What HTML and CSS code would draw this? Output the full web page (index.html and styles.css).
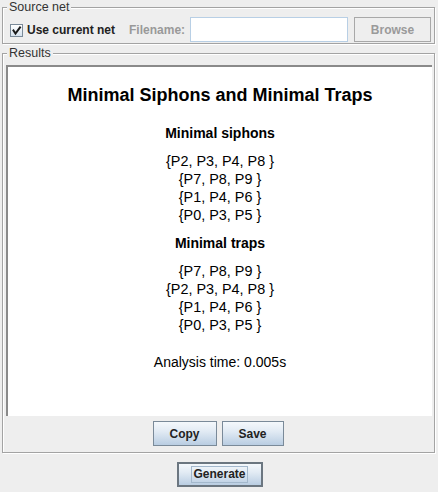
FILE: index.html
```html
<!DOCTYPE html>
<html>
<head>
<meta charset="utf-8">
<link rel="stylesheet" href="styles.css">
</head>
<body>
<div class="window">
  <fieldset class="group source">
    <legend class="group-title">Source net</legend>
    <div class="source-row">
      <label class="check">
        <span class="check-box">
          <svg width="11" height="11" viewBox="0 0 11 11"><path d="M2.5 5.5 L4.5 8.5 L9 2.5" fill="none" stroke="#1a1a1a" stroke-width="2" stroke-linecap="square"/></svg>
        </span>
        <span class="check-label">Use current net</span>
      </label>
      <span class="field-label">Filename:</span>
      <span class="text-field"></span>
      <span class="btn btn-disabled">Browse</span>
    </div>
  </fieldset>
  <fieldset class="group results">
    <legend class="group-title">Results</legend>
    <div class="scroll-pane">
      <h1 class="doc-title">Minimal Siphons and Minimal Traps</h1>
      <h2 class="doc-sub">Minimal siphons</h2>
      <div class="set-list">
        <div>{P2, P3, P4, P8 }</div>
        <div>{P7, P8, P9 }</div>
        <div>{P1, P4, P6 }</div>
        <div>{P0, P3, P5 }</div>
      </div>
      <h2 class="doc-sub">Minimal traps</h2>
      <div class="set-list">
        <div>{P7, P8, P9 }</div>
        <div>{P2, P3, P4, P8 }</div>
        <div>{P1, P4, P6 }</div>
        <div>{P0, P3, P5 }</div>
      </div>
      <div class="analysis">Analysis time: 0.005s</div>
    </div>
    <div class="button-row">
      <span class="btn btn-copy">Copy</span>
      <span class="btn btn-save">Save</span>
    </div>
  </fieldset>
  <div class="generate-row">
    <span class="btn btn-default"><span class="focus">Generate</span></span>
  </div>
</div>
</body>
</html>
```
FILE: styles.css
```css
* { box-sizing: border-box; }
html, body {
  margin: 0;
  padding: 0;
  background: #eeeeee;
}
body {
  width: 438px;
  height: 492px;
  overflow: hidden;
  font-family: "Liberation Sans", Arial, sans-serif;
  color: #000;
}
.window {
  display: flex;
  flex-direction: column;
}
.group {
  margin: 0 3px 0 2px;
  border: 1px solid #a3a3a3;
  box-shadow: inset 1px 1px 0 #fff, 1px 1px 0 #fff;
  min-inline-size: 0;
}
.group-title {
  font-size: 12.5px;
  line-height: 15px;
  color: #333333;
  padding: 0 2px;
  background: #eeeeee;
}
.source {
  padding: 2px 3px 1px 7px;
}
.source .group-title { margin-left: -3px; }
.source-row {
  display: flex;
  align-items: center;
  height: 25px;
  white-space: nowrap;
}
.source-row > * { flex-shrink: 0; }
.check {
  display: flex;
  align-items: center;
}
.check-box {
  width: 13px;
  height: 13px;
  border: 1px solid #7a8a99;
  background: linear-gradient(#ffffff, #d6e2ee);
  display: flex;
  align-items: center;
  justify-content: center;
  margin-top: 2px;
}
.check-box svg { display: block; }
.check-label {
  margin-left: 4px;
  font-size: 12px;
  font-weight: bold;
  color: #222;
}
.field-label {
  margin-left: 14px;
  font-size: 12px;
  font-weight: bold;
  color: #999999;
}
.text-field {
  margin-left: 5px;
  width: 158px;
  height: 25px;
  background: #fff;
  border: 1px solid #b8cfe5;
}
.btn {
  display: flex;
  align-items: center;
  justify-content: center;
  height: 25px;
  font-size: 12px;
  font-weight: bold;
  color: #222;
  border: 1px solid #7a8a99;
  background: linear-gradient(#f4f8fc 0%, #e2ebf4 40%, #b9cde2 100%);
}
.btn-disabled {
  margin-left: 6px;
  width: 77px;
  color: #9a9a9a;
  border-color: #a8a8a8;
  background: #eeeeee;
}
.results {
  margin-top: 2px;
  padding: 4px 2px 6px 3px;
}
.results .group-title { margin-left: 1px; }
.scroll-pane {
  height: 351px;
  background: #fff;
  border-top: 2px solid #8a8a8a;
  border-left: 2px solid #8a8a8a;
  text-align: center;
  padding-top: 17px;
}
.doc-title {
  margin: 0;
  font-size: 18px;
  line-height: 22px;
  font-weight: bold;
}
.doc-sub {
  margin: 18px 0 0;
  font-size: 14px;
  line-height: 18px;
  font-weight: bold;
}
.set-list {
  margin-top: 10px;
  font-size: 14.4px;
  line-height: 18px;
}
.set-list + .doc-sub { margin-top: 10px; }
.analysis {
  margin-top: 19px;
  font-size: 14px;
  line-height: 18px;
}
.button-row {
  display: flex;
  justify-content: center;
  gap: 5px;
  margin-top: 5px;
  padding-right: 2px;
}
.btn-copy { width: 64px; }
.btn-save { width: 62px; }
.generate-row {
  display: flex;
  justify-content: center;
  margin-top: 9px;
  padding-left: 1px;
}
.btn-default {
  width: 86px;
  height: 25px;
  border: 2px solid #6b7680;
}
.focus {
  border: 1px solid #a3b8cc;
  padding: 0 1px;
  line-height: 15px;
}
```
